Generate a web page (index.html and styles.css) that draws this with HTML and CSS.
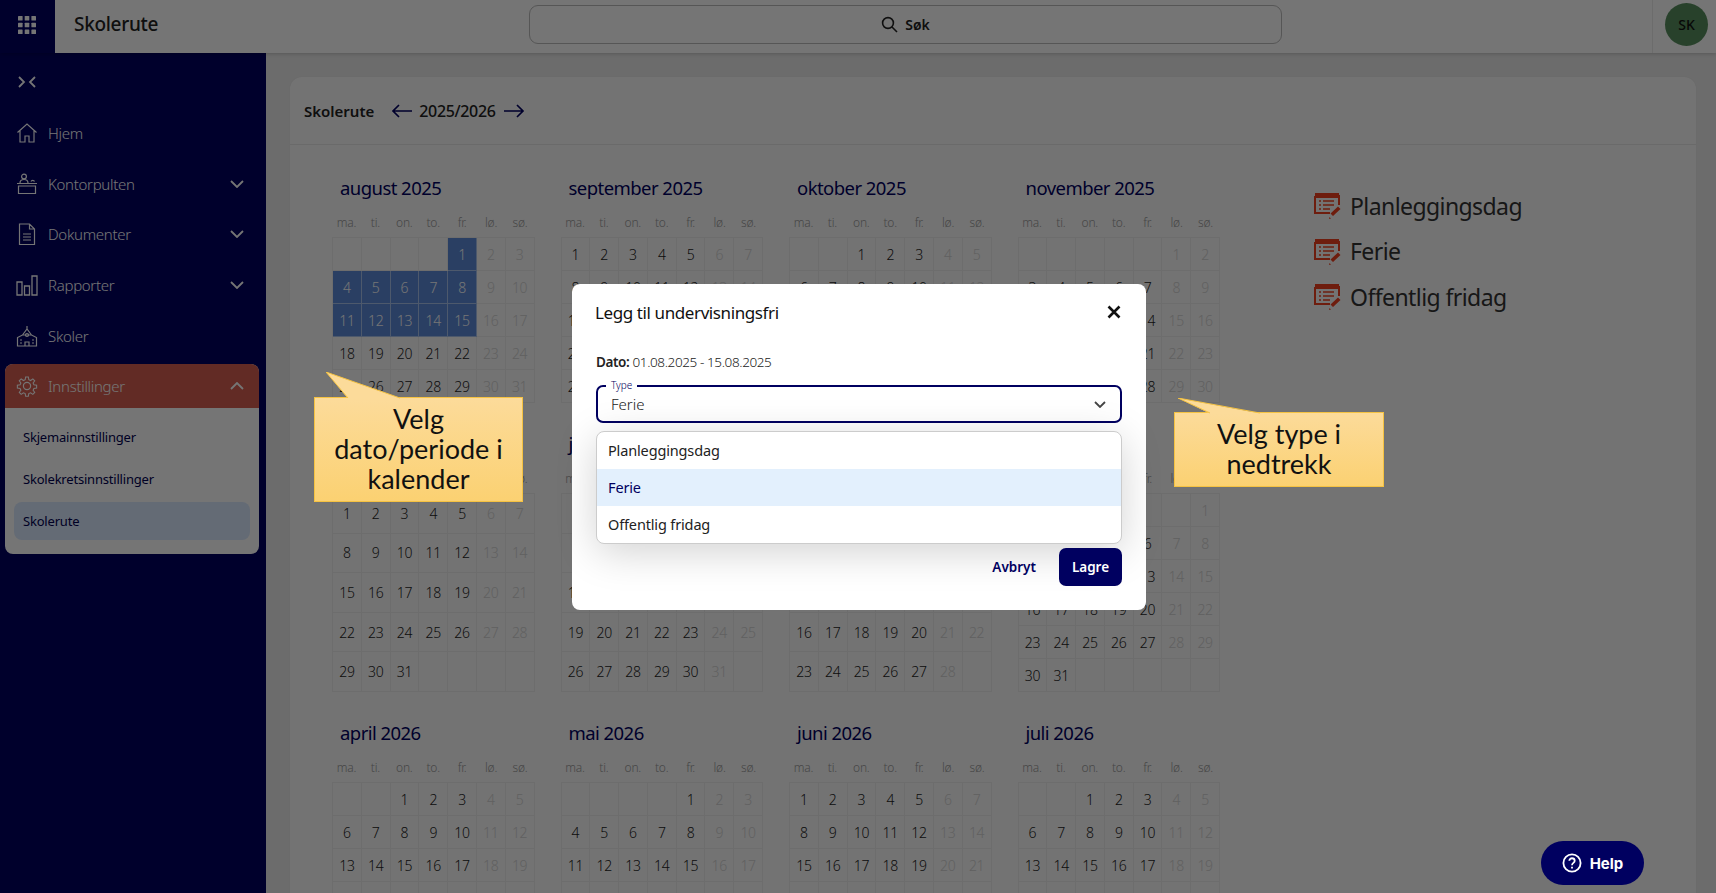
FILE: index.html
```html
<!DOCTYPE html>
<html lang="no">
<head>
<meta charset="utf-8">
<title>Skolerute</title>
<link rel="stylesheet" href="styles.css">
</head>
<body>
<header class="topbar">
  <div class="apps">
    <svg width="18" height="18" viewBox="0 0 18 18" fill="#fff"><rect x="0" y="0" width="4.6" height="4.6" rx=".6"/><rect x="6.7" y="0" width="4.6" height="4.6" rx=".6"/><rect x="13.4" y="0" width="4.6" height="4.6" rx=".6"/><rect x="0" y="6.7" width="4.6" height="4.6" rx=".6"/><rect x="6.7" y="6.7" width="4.6" height="4.6" rx=".6"/><rect x="13.4" y="6.7" width="4.6" height="4.6" rx=".6"/><rect x="0" y="13.4" width="4.6" height="4.6" rx=".6"/><rect x="6.7" y="13.4" width="4.6" height="4.6" rx=".6"/><rect x="13.4" y="13.4" width="4.6" height="4.6" rx=".6"/></svg>
  </div>
  <div class="app-title">Skolerute</div>
  <div class="search">
    <svg width="17" height="17" viewBox="0 0 17 17" fill="none" stroke="#222" stroke-width="1.6"><circle cx="7" cy="7" r="5.4"/><path d="M11 11l5 5"/></svg>
    <span>Søk</span>
  </div>
  <div class="user"><div class="avatar">SK</div></div>
</header>
<div class="main">
  <nav class="sidebar">
    <div class="collapse">
      <svg width="18" height="12" viewBox="0 0 18 12" fill="none" stroke="#fff" stroke-width="1.8"><path d="M1 1l5 5-5 5M17 1l-5 5 5 5"/></svg>
    </div>
    <div class="nav-item">
      <svg class="nav-icon" viewBox="0 0 22 22" fill="none" stroke="#fff" stroke-width="1.2"><path d="M1.5 10.5L11 2l9.500 8.500M4 8.500V20h5v-6h4v6h5V8.500"/></svg>
      <span>Hjem</span>
    </div>
    <div class="nav-item">
      <svg class="nav-icon" viewBox="0 0 22 22" fill="none" stroke="#fff" stroke-width="1.2"><circle cx="8" cy="3.500" r="2.400"/><path d="M4 10c0-2.500 2-3.500 4-3.500s4 1 4 3.500M1 10.500h20M2.500 13h17v7.500h-17zM15 8.500c.5-1.500 3-1.500 3.500 0"/></svg>
      <span>Kontorpulten</span>
      <svg class="chev" viewBox="0 0 14 8" fill="none" stroke="#fff" stroke-width="1.800"><path d="M1 1l6 6 6-6"/></svg>
    </div>
    <div class="nav-item">
      <svg class="nav-icon" viewBox="0 0 22 22" fill="none" stroke="#fff" stroke-width="1.2"><path d="M3.500 1h10l5 5v15.500h-15zM13.500 1v5h5M7 11h8M7 14h8M7 17h8"/></svg>
      <span>Dokumenter</span>
      <svg class="chev" viewBox="0 0 14 8" fill="none" stroke="#fff" stroke-width="1.800"><path d="M1 1l6 6 6-6"/></svg>
    </div>
    <div class="nav-item">
      <svg class="nav-icon" viewBox="0 0 22 22" fill="none" stroke="#fff" stroke-width="1.300"><path d="M1 8h5v13H1zM8.500 12h5v9h-5zM16 2h5v19h-5z"/></svg>
      <span>Rapporter</span>
      <svg class="chev" viewBox="0 0 14 8" fill="none" stroke="#fff" stroke-width="1.800"><path d="M1 1l6 6 6-6"/></svg>
    </div>
    <div class="nav-item">
      <svg class="nav-icon" viewBox="0 0 22 22" fill="none" stroke="#fff" stroke-width="1.200"><path d="M11 1v3M6.500 10L11 4l4.500 6M1.500 21v-8.500l5-2.500h9l5 2.500V21zM9 21v-4h4v4M4 15h2M16 15h2M4 18h2M16 18h2"/><circle cx="11" cy="10" r="1.500"/></svg>
      <span>Skoler</span>
    </div>
    <div class="nav-group">
      <div class="nav-item active">
        <svg class="nav-icon" viewBox="0 0 22 22" fill="none" stroke="#fff" stroke-width="1.200"><circle cx="11" cy="11" r="3.600"/><path d="M9.500 1h3l.5 3 2 .9 2.500-1.800 2.100 2.100-1.800 2.500.9 2 3 .5v3l-3 .5-.9 2 1.800 2.500-2.100 2.100-2.500-1.800-2 .9-.5 3h-3l-.5-3-2-.9-2.500 1.800-2.100-2.100 1.800-2.500-.9-2-3-.5v-3l3-.5.9-2-1.800-2.500 2.100-2.100 2.500 1.800 2-.9z" transform="translate(1.100 1.100) scale(.9)"/></svg>
        <span>Innstillinger</span>
        <svg class="chev" viewBox="0 0 14 8" fill="none" stroke="#fff" stroke-width="1.800"><path d="M1 7l6-6 6 6"/></svg>
      </div>
      <div class="sub">
        <div class="sub-item">Skjemainnstillinger</div>
        <div class="sub-item">Skolekretsinnstillinger</div>
        <div class="sub-item current">Skolerute</div>
      </div>
    </div>
  </nav>
  <section class="content">
    <div class="card">
      <div class="card-head">
        <strong>Skolerute</strong>
        <svg class="arrow" width="22" height="14" viewBox="0 0 22 14" fill="none" stroke="#000060" stroke-width="1.700"><path d="M21 7H2M8 1L2 7l6 6"/></svg>
        <span class="year">2025/2026</span>
        <svg class="arrow" width="22" height="14" viewBox="0 0 22 14" fill="none" stroke="#000060" stroke-width="1.700"><path d="M1 7h19M14 1l6 6-6 6"/></svg>
      </div>
      <div class="card-body">
        <div class="year-grid">
          <div class="month">
            <h3>august 2025</h3>
            <div class="weekdays"><span>ma.</span><span>ti.</span><span>on.</span><span>to.</span><span>fr.</span><span>lø.</span><span>sø.</span></div>
            <div class="days"><span></span><span></span><span></span><span></span><span class="sel">1</span><span>2</span><span>3</span><span class="sel">4</span><span class="sel">5</span><span class="sel">6</span><span class="sel">7</span><span class="sel">8</span><span>9</span><span>10</span><span class="sel">11</span><span class="sel">12</span><span class="sel">13</span><span class="sel">14</span><span class="sel">15</span><span>16</span><span>17</span><span>18</span><span>19</span><span>20</span><span>21</span><span>22</span><span>23</span><span>24</span><span>25</span><span>26</span><span>27</span><span>28</span><span>29</span><span>30</span><span>31</span></div>
          </div>
          <div class="month">
            <h3>september 2025</h3>
            <div class="weekdays"><span>ma.</span><span>ti.</span><span>on.</span><span>to.</span><span>fr.</span><span>lø.</span><span>sø.</span></div>
            <div class="days"><span>1</span><span>2</span><span>3</span><span>4</span><span>5</span><span>6</span><span>7</span><span>8</span><span>9</span><span>10</span><span>11</span><span>12</span><span>13</span><span>14</span><span>15</span><span>16</span><span>17</span><span>18</span><span>19</span><span>20</span><span>21</span><span>22</span><span>23</span><span>24</span><span>25</span><span>26</span><span>27</span><span>28</span><span>29</span><span>30</span><span></span><span></span><span></span><span></span><span></span></div>
          </div>
          <div class="month">
            <h3>oktober 2025</h3>
            <div class="weekdays"><span>ma.</span><span>ti.</span><span>on.</span><span>to.</span><span>fr.</span><span>lø.</span><span>sø.</span></div>
            <div class="days"><span></span><span></span><span>1</span><span>2</span><span>3</span><span>4</span><span>5</span><span>6</span><span>7</span><span>8</span><span>9</span><span>10</span><span>11</span><span>12</span><span>13</span><span>14</span><span>15</span><span>16</span><span>17</span><span>18</span><span>19</span><span>20</span><span>21</span><span>22</span><span>23</span><span>24</span><span>25</span><span>26</span><span>27</span><span>28</span><span>29</span><span>30</span><span>31</span><span></span><span></span></div>
          </div>
          <div class="month">
            <h3>november 2025</h3>
            <div class="weekdays"><span>ma.</span><span>ti.</span><span>on.</span><span>to.</span><span>fr.</span><span>lø.</span><span>sø.</span></div>
            <div class="days"><span></span><span></span><span></span><span></span><span></span><span>1</span><span>2</span><span>3</span><span>4</span><span>5</span><span>6</span><span>7</span><span>8</span><span>9</span><span>10</span><span>11</span><span>12</span><span>13</span><span>14</span><span>15</span><span>16</span><span>17</span><span>18</span><span>19</span><span>20</span><span>21</span><span>22</span><span>23</span><span>24</span><span>25</span><span>26</span><span>27</span><span>28</span><span>29</span><span>30</span></div>
          </div>
          <div class="month">
            <h3>desember 2025</h3>
            <div class="weekdays"><span>ma.</span><span>ti.</span><span>on.</span><span>to.</span><span>fr.</span><span>lø.</span><span>sø.</span></div>
            <div class="days"><span>1</span><span>2</span><span>3</span><span>4</span><span>5</span><span>6</span><span>7</span><span>8</span><span>9</span><span>10</span><span>11</span><span>12</span><span>13</span><span>14</span><span>15</span><span>16</span><span>17</span><span>18</span><span>19</span><span>20</span><span>21</span><span>22</span><span>23</span><span>24</span><span>25</span><span>26</span><span>27</span><span>28</span><span>29</span><span>30</span><span>31</span><span></span><span></span><span></span><span></span></div>
          </div>
          <div class="month">
            <h3>januar 2026</h3>
            <div class="weekdays"><span>ma.</span><span>ti.</span><span>on.</span><span>to.</span><span>fr.</span><span>lø.</span><span>sø.</span></div>
            <div class="days"><span></span><span></span><span></span><span>1</span><span>2</span><span>3</span><span>4</span><span>5</span><span>6</span><span>7</span><span>8</span><span>9</span><span>10</span><span>11</span><span>12</span><span>13</span><span>14</span><span>15</span><span>16</span><span>17</span><span>18</span><span>19</span><span>20</span><span>21</span><span>22</span><span>23</span><span>24</span><span>25</span><span>26</span><span>27</span><span>28</span><span>29</span><span>30</span><span>31</span><span></span></div>
          </div>
          <div class="month">
            <h3>februar 2026</h3>
            <div class="weekdays"><span>ma.</span><span>ti.</span><span>on.</span><span>to.</span><span>fr.</span><span>lø.</span><span>sø.</span></div>
            <div class="days"><span></span><span></span><span></span><span></span><span></span><span></span><span>1</span><span>2</span><span>3</span><span>4</span><span>5</span><span>6</span><span>7</span><span>8</span><span>9</span><span>10</span><span>11</span><span>12</span><span>13</span><span>14</span><span>15</span><span>16</span><span>17</span><span>18</span><span>19</span><span>20</span><span>21</span><span>22</span><span>23</span><span>24</span><span>25</span><span>26</span><span>27</span><span>28</span><span></span></div>
          </div>
          <div class="month">
            <h3>mars 2026</h3>
            <div class="weekdays"><span>ma.</span><span>ti.</span><span>on.</span><span>to.</span><span>fr.</span><span>lø.</span><span>sø.</span></div>
            <div class="days"><span></span><span></span><span></span><span></span><span></span><span></span><span>1</span><span>2</span><span>3</span><span>4</span><span>5</span><span>6</span><span>7</span><span>8</span><span>9</span><span>10</span><span>11</span><span>12</span><span>13</span><span>14</span><span>15</span><span>16</span><span>17</span><span>18</span><span>19</span><span>20</span><span>21</span><span>22</span><span>23</span><span>24</span><span>25</span><span>26</span><span>27</span><span>28</span><span>29</span><span>30</span><span>31</span><span></span><span></span><span></span><span></span><span></span></div>
          </div>
          <div class="month">
            <h3>april 2026</h3>
            <div class="weekdays"><span>ma.</span><span>ti.</span><span>on.</span><span>to.</span><span>fr.</span><span>lø.</span><span>sø.</span></div>
            <div class="days"><span></span><span></span><span>1</span><span>2</span><span>3</span><span>4</span><span>5</span><span>6</span><span>7</span><span>8</span><span>9</span><span>10</span><span>11</span><span>12</span><span>13</span><span>14</span><span>15</span><span>16</span><span>17</span><span>18</span><span>19</span><span>20</span><span>21</span><span>22</span><span>23</span><span>24</span><span>25</span><span>26</span><span>27</span><span>28</span><span>29</span><span>30</span><span></span><span></span><span></span></div>
          </div>
          <div class="month">
            <h3>mai 2026</h3>
            <div class="weekdays"><span>ma.</span><span>ti.</span><span>on.</span><span>to.</span><span>fr.</span><span>lø.</span><span>sø.</span></div>
            <div class="days"><span></span><span></span><span></span><span></span><span>1</span><span>2</span><span>3</span><span>4</span><span>5</span><span>6</span><span>7</span><span>8</span><span>9</span><span>10</span><span>11</span><span>12</span><span>13</span><span>14</span><span>15</span><span>16</span><span>17</span><span>18</span><span>19</span><span>20</span><span>21</span><span>22</span><span>23</span><span>24</span><span>25</span><span>26</span><span>27</span><span>28</span><span>29</span><span>30</span><span>31</span></div>
          </div>
          <div class="month">
            <h3>juni 2026</h3>
            <div class="weekdays"><span>ma.</span><span>ti.</span><span>on.</span><span>to.</span><span>fr.</span><span>lø.</span><span>sø.</span></div>
            <div class="days"><span>1</span><span>2</span><span>3</span><span>4</span><span>5</span><span>6</span><span>7</span><span>8</span><span>9</span><span>10</span><span>11</span><span>12</span><span>13</span><span>14</span><span>15</span><span>16</span><span>17</span><span>18</span><span>19</span><span>20</span><span>21</span><span>22</span><span>23</span><span>24</span><span>25</span><span>26</span><span>27</span><span>28</span><span>29</span><span>30</span><span></span><span></span><span></span><span></span><span></span></div>
          </div>
          <div class="month">
            <h3>juli 2026</h3>
            <div class="weekdays"><span>ma.</span><span>ti.</span><span>on.</span><span>to.</span><span>fr.</span><span>lø.</span><span>sø.</span></div>
            <div class="days"><span></span><span></span><span>1</span><span>2</span><span>3</span><span>4</span><span>5</span><span>6</span><span>7</span><span>8</span><span>9</span><span>10</span><span>11</span><span>12</span><span>13</span><span>14</span><span>15</span><span>16</span><span>17</span><span>18</span><span>19</span><span>20</span><span>21</span><span>22</span><span>23</span><span>24</span><span>25</span><span>26</span><span>27</span><span>28</span><span>29</span><span>30</span><span>31</span><span></span><span></span></div>
          </div>
        </div>
        <ul class="legend">
          <li><svg width="27" height="27" viewBox="0 0 27 27"><path d="M1 1h24v5H1z" fill="#ef4120"/><path d="M1 4h24v9M1 4v17h15" fill="none" stroke="#ef4120" stroke-width="2"/><path d="M5 9h2M9 9h11M5 13h2M9 13h11M5 17h2M9 17h7" stroke="#ef4120" stroke-width="1.600"/><path d="M24 14.500l2.500 2.500-7.500 7-2.500-2.500zM15.500 25l1.500 1.500-2 .5z" fill="#ef4120"/></svg><span>Planleggingsdag</span></li>
          <li><svg width="27" height="27" viewBox="0 0 27 27"><path d="M1 1h24v5H1z" fill="#ef4120"/><path d="M1 4h24v9M1 4v17h15" fill="none" stroke="#ef4120" stroke-width="2"/><path d="M5 9h2M9 9h11M5 13h2M9 13h11M5 17h2M9 17h7" stroke="#ef4120" stroke-width="1.600"/><path d="M24 14.500l2.500 2.500-7.500 7-2.500-2.500zM15.500 25l1.500 1.500-2 .5z" fill="#ef4120"/></svg><span>Ferie</span></li>
          <li><svg width="27" height="27" viewBox="0 0 27 27"><path d="M1 1h24v5H1z" fill="#ef4120"/><path d="M1 4h24v9M1 4v17h15" fill="none" stroke="#ef4120" stroke-width="2"/><path d="M5 9h2M9 9h11M5 13h2M9 13h11M5 17h2M9 17h7" stroke="#ef4120" stroke-width="1.600"/><path d="M24 14.500l2.500 2.500-7.500 7-2.500-2.500zM15.500 25l1.500 1.500-2 .5z" fill="#ef4120"/></svg><span>Offentlig fridag</span></li>
        </ul>
      </div>
    </div>
  </section>
</div>

<div class="scrim"></div>

<div class="modal">
  <div class="modal-head">
    <h2>Legg til undervisningsfri</h2>
    <svg width="14" height="14" viewBox="0 0 14 14" fill="none" stroke="#111" stroke-width="2.600"><path d="M1.500 1.500l11 11M12.500 1.500l-11 11"/></svg>
  </div>
  <p class="dato"><b>Dato:</b> 01.08.2025 - 15.08.2025</p>
  <div class="select">
    <span class="select-label">Type</span>
    <span>Ferie</span>
    <svg width="12" height="7" viewBox="0 0 12 7" fill="none" stroke="#444" stroke-width="1.800"><path d="M1 1l5 5 5-5"/></svg>
  </div>
  <ul class="options">
    <li>Planleggingsdag</li>
    <li class="picked">Ferie</li>
    <li>Offentlig fridag</li>
  </ul>
  <div class="actions">
    <button class="cancel" type="button">Avbryt</button>
    <button class="save" type="button">Lagre</button>
  </div>
</div>

<div class="callout callout-date">
  <svg class="tail tail-date" width="76" height="27" viewBox="0 0 76 27"><path d="M0 0L22 26.500H75.500z" fill="#fcdb9a"/><path d="M22 26L0 0l74 26" fill="none" stroke="#f5c242"/></svg>
  Velg dato/periode i kalender
</div>
<div class="callout callout-type">
  <svg class="tail tail-type" width="84" height="16" viewBox="0 0 84 16"><path d="M0 0L32 15.500H83z" fill="#fcdb9a"/><path d="M32 15L0 0l82 15" fill="none" stroke="#f5c242"/></svg>
  Velg type i nedtrekk
</div>

<button class="help" type="button">
  <svg width="20" height="20" viewBox="0 0 20 20" fill="none" stroke="#fff" stroke-width="1.800"><circle cx="10" cy="10" r="8.600"/><path d="M7.300 7.800c0-3.400 5.400-3.400 5.400 0 0 2.200-2.700 2-2.700 4.400"/><path d="M10 13.700v1.800"/></svg>
  <span>Help</span>
</button>
</body>
</html>
```
FILE: styles.css
```css
* { box-sizing: border-box; }
html, body { margin: 0; height: 100%; overflow: hidden; }
body { font-family: "Noto Sans", "Liberation Sans", sans-serif; background: #ececec; color: #222; display: flex; flex-direction: column; }
ul { margin: 0; padding: 0; list-style: none; }

.topbar { height: 53px; flex: none; display: flex; align-items: center; background: #fff; box-shadow: 0 1px 4px rgba(0,0,0,.2); position: relative; z-index: 1; }
.apps { width: 55px; height: 53px; background: #000060; display: flex; align-items: center; justify-content: center; padding: 0 2px 4px 0; }
.app-title { width: 474px; padding: 0 0 5px 19px; font-size: 19px; font-weight: 500; letter-spacing: -.3px; color: #222; }
.search { width: 753px; height: 39px; margin-top: -4px; border: 1px solid #bbb; border-radius: 9px; display: flex; align-items: center; justify-content: center; gap: 7px; font-size: 14px; font-weight: 600; }
.user { margin-left: auto; width: 64px; height: 53px; border-left: 1px solid #ececec; display: flex; align-items: center; padding-left: 12px; }
.avatar { width: 43px; height: 43px; margin-top: -4px; border-radius: 50%; background: #578e5e; color: #111; display: flex; align-items: center; justify-content: center; font-size: 14px; font-weight: 500; }

.main { flex: 1; display: flex; min-height: 0; }
.sidebar { width: 266px; flex: none; background: #000060; color: #fff; padding: 0 7px 0 5px; }
.collapse { height: 54.600px; padding: 23px 0 0 13px; }
.collapse svg { display: block; }
.nav-item { height: 50.700px; display: flex; align-items: center; padding: 0 15px 0 11px; font-size: 15px; font-weight: 300; letter-spacing: -.3px; }
.nav-icon { width: 22px; height: 22px; flex: none; margin-right: 10px; }
.chev { width: 14px; height: 8px; margin-left: auto; }
.nav-group { margin-top: 3px; border-radius: 8px; overflow: hidden; background: #fff; }
.nav-group .nav-item { height: 44px; background: #d55f51; }
.sub { padding: 8px 9px 14px; height: 146px; }
.sub-item { height: 42px; display: flex; align-items: center; padding-left: 9px; color: #000050; font-size: 13px; letter-spacing: -.2px; }
.sub-item.current { height: 38px; margin-top: 2px; background: #dbe9ff; border-radius: 8px; }

.content { flex: 1; min-width: 0; padding: 24px 20px 0 24px; }
.card { background: #fbfbfb; border-radius: 12px 12px 0 0; height: 100%; overflow: hidden; box-shadow: 0 0 2px rgba(0,0,0,.06); }
.card-head { height: 68px; border-bottom: 1px solid #e6e6e6; display: flex; align-items: center; padding-left: 14px; font-size: 16px; }
.card-head strong { font-size: 15px; font-weight: 600; margin-right: 17px; }
.year { font-weight: 500; letter-spacing: -.35px; margin: 0 7px 0 6px; }
.card-body { display: flex; padding: 29px 0 0 42px; }
.year-grid { width: 914px; flex: none; display: grid; grid-template-columns: repeat(4, 202.500px); column-gap: 26px; row-gap: 27px; }
.month { display: flex; flex-direction: column; }
.month h3 { margin: 0; height: 28px; padding-left: 8px; font-size: 18.500px; font-weight: 400; letter-spacing: -.55px; line-height: 28px; color: #000060; }
.weekdays { margin-top: 14px; height: 21px; display: grid; grid-template-columns: repeat(7, 1fr); font-size: 12px; font-weight: 300; letter-spacing: -.2px; color: #999; text-align: center; line-height: 13px; }
.days { flex: 1; display: grid; grid-template-columns: repeat(7, 1fr); grid-auto-rows: minmax(33px, 1fr); border-left: 1px solid #ededed; border-top: 1px solid #ededed; }
.days span { border-right: 1px solid #ededed; border-bottom: 1px solid #ededed; display: flex; align-items: center; justify-content: center; font-size: 14px; font-weight: 300; letter-spacing: -.3px; color: #222; }
.days span:nth-child(7n+6), .days span:nth-child(7n) { color: #d2d2d2; }
.days span.sel { background: #5c8ad8; color: #fff; border-color: #a9c2ec; }

.legend { margin-left: 68px; padding-top: 9px; display: flex; flex-direction: column; }
.legend li { height: 45.500px; display: flex; align-items: center; gap: 9px; font-size: 23px; letter-spacing: -.58px; color: #333; }

.scrim { position: absolute; inset: 0; background: rgba(0,0,0,.54); z-index: 2; }

.modal { position: absolute; z-index: 3; left: 572px; top: 284px; width: 574px; height: 326px; background: #fff; border-radius: 8px; padding: 0 24px; }
.modal-head { height: 57px; margin-left: -1px; padding-right: 1px; display: flex; align-items: center; justify-content: space-between; }
.modal-head h2 { margin: 0; font-size: 17px; font-weight: 400; letter-spacing: -.4px; color: #111; }
.modal-head svg { margin-top: -1px; }
.dato { margin: 11px 0 0; font-size: 13.500px; font-weight: 300; letter-spacing: -.39px; line-height: 20px; color: #222; }
.dato b { font-weight: 600; }
.select { position: relative; margin-top: 13px; height: 38px; border: 2px solid #000060; border-radius: 7px; display: flex; align-items: center; justify-content: space-between; padding: 0 14px 0 13px; font-size: 15px; font-weight: 300; color: #222; }
.select-label { position: absolute; left: 8px; top: -7px; padding: 0 5px; background: #fff; font-size: 10px; line-height: 10px; color: #000060; }
.options { position: relative; margin-top: 8px; height: 113px; border: 1px solid #ccc; border-radius: 8px; background: #fff; overflow: hidden; box-shadow: 0 8px 40px rgba(0,0,0,.18); }
.options li { height: 37px; display: flex; align-items: center; padding: 0 0 2px 11px; font-size: 14.500px; letter-spacing: -.15px; color: #222; }
.options li.picked { background: #e3f0fd; color: #000060; }
.actions { position: relative; margin-top: 4px; display: flex; justify-content: flex-end; align-items: center; gap: 23px; }
.actions button { font: inherit; font-size: 13.500px; font-weight: 600; border: 0; cursor: pointer; }
.cancel { background: none; color: #000060; padding: 0; }
.save { width: 63px; height: 38px; background: #000060; color: #fff; border-radius: 7px; }

.callout { position: absolute; z-index: 4; border: 1px solid #f5c242; background: linear-gradient(#fcdb9a, #fbd172); color: #111; font-family: Lato, sans-serif; font-size: 27px; line-height: 30px; text-align: center; display: flex; align-items: center; justify-content: center; padding: 0 8px 1px; }
.callout-date { left: 314px; top: 397px; width: 209px; height: 105px; }
.callout-type { left: 1174px; top: 412px; width: 210px; height: 75px; padding: 0 28px 1px; }
.tail { position: absolute; }
.tail-date { left: 11px; top: -26px; }
.tail-type { left: 3px; top: -15px; }

.help { position: absolute; z-index: 4; left: 1541px; top: 841px; width: 103px; height: 44px; border: 0; border-radius: 22px; background: #000060; color: #fff; font-family: Inter, sans-serif; font-size: 15px; font-weight: 700; display: flex; align-items: center; justify-content: center; gap: 8px; }
```
